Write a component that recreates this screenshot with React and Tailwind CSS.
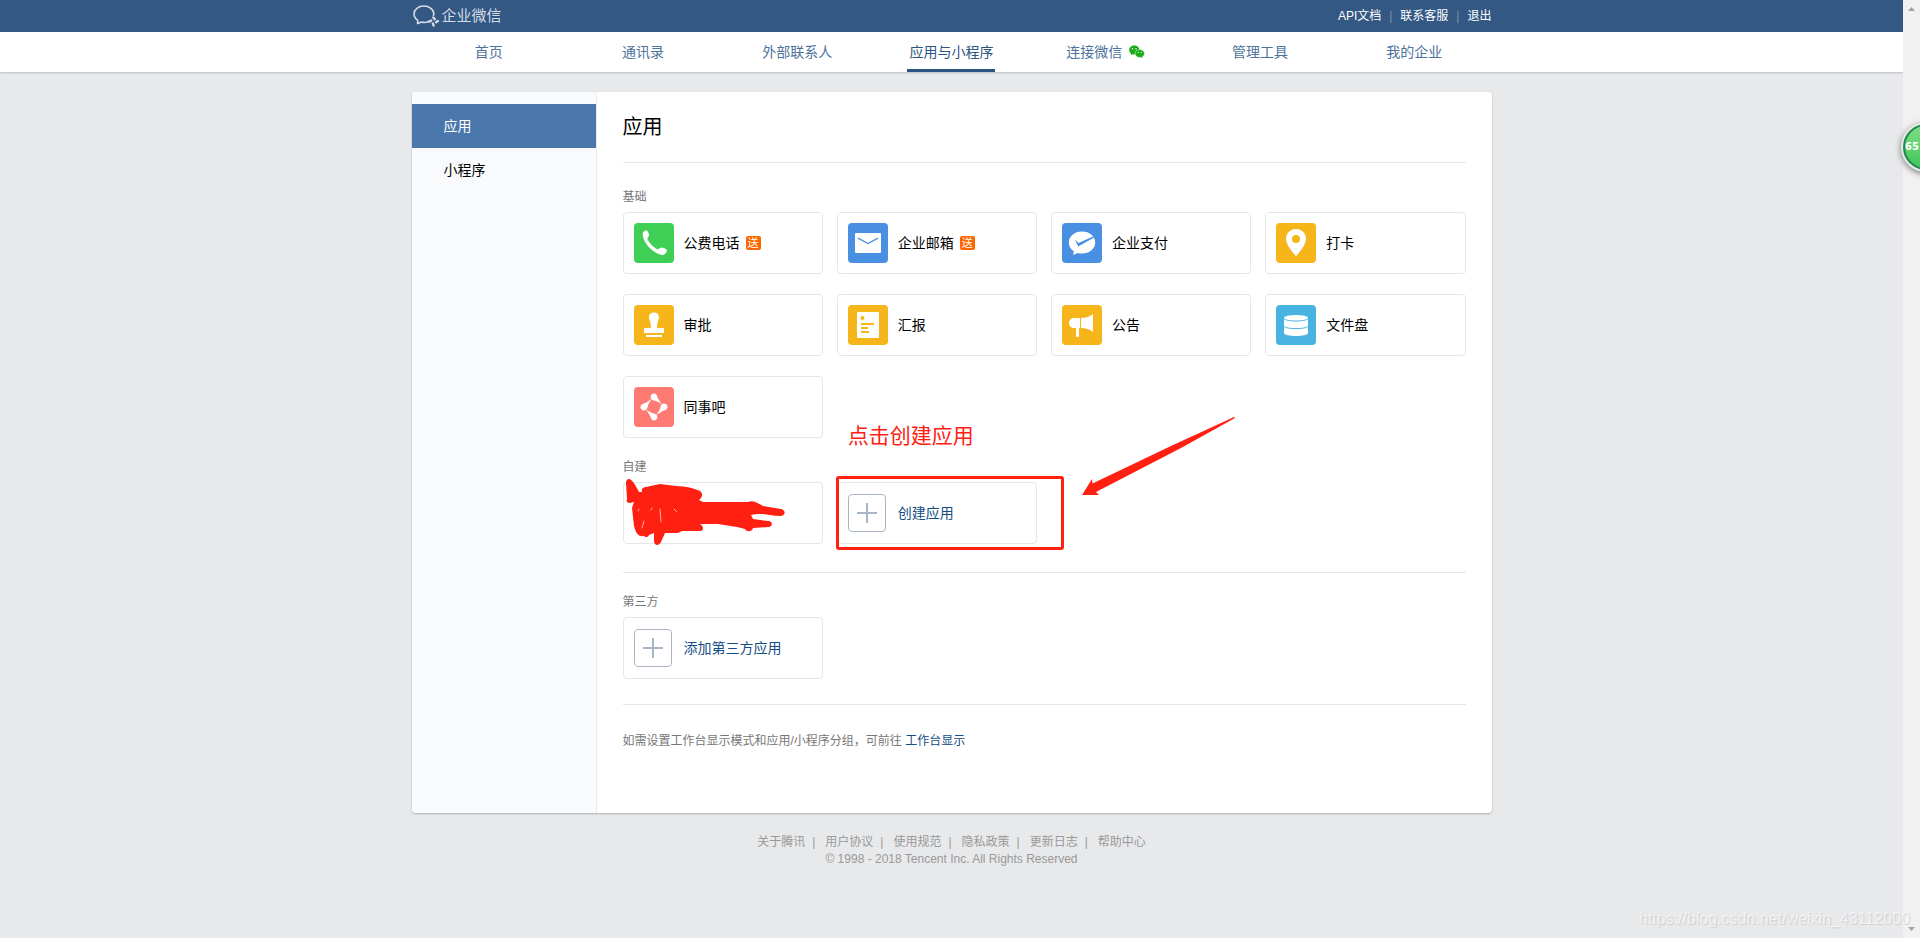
import React from "react";

const navItems = [
  { text: "首页" },
  { text: "通讯录" },
  { text: "外部联系人" },
  { text: "应用与小程序", active: true },
  { text: "连接微信", wechat: true },
  { text: "管理工具" },
  { text: "我的企业" },
];

const footerLinks = ["关于腾讯", "用户协议", "使用规范", "隐私政策", "更新日志", "帮助中心"];

const LogoIcon = () => (
  <svg width="27" height="22" viewBox="0 0 27 22" fill="none" stroke="#d3dce7" strokeWidth="1.6" strokeLinecap="round" strokeLinejoin="round" className="shrink-0">
    <path d="M16.500 16.200C14.500 17.500 12 17.800 8.800 17.100L4.500 18.600L4.800 15.300C2.300 13.500 1 11.200 1 8.900C1 4.500 5.300 1 10.800 1C16.300 1 20.800 4.500 20.800 8.700C20.800 9.300 20.700 9.700 20.500 10.200" />
    <path d="M20.300 12.400L21.800 14.200M25 16L23 17.200M20.600 20.400L19.800 18.600M16.200 16.600L18.200 15.600" strokeWidth="2.400" />
  </svg>
);

const WechatIcon = () => (
  <svg width="16" height="14" viewBox="0 0 16 14" className="shrink-0">
    <path d="M5.300 0.600C2.400 0.600 0.200 2.500 0.200 5C0.200 6.400 0.900 7.600 2 8.400L1.500 10.200L3.500 9.200C4.100 9.300 4.700 9.400 5.300 9.400C8.200 9.400 10.500 7.400 10.500 5C10.500 2.500 8.200 0.600 5.300 0.600Z" fill="#1aad19" />
    <path d="M10.800 4.600C8.100 4.600 6 6.300 6 8.600C6 10.900 8.100 12.600 10.800 12.600C11.300 12.600 11.800 12.500 12.300 12.400L14.100 13.300L13.600 11.700C14.800 10.900 15.500 9.900 15.500 8.600C15.500 6.300 13.400 4.600 10.800 4.600Z" fill="#1aad19" stroke="#fff" strokeWidth="0.500" />
    <g fill="#fff">
      <circle cx="3.600" cy="3.700" r="0.700" />
      <circle cx="7" cy="3.700" r="0.700" />
      <circle cx="9.200" cy="7.500" r="0.600" />
      <circle cx="12.200" cy="7.500" r="0.600" />
    </g>
  </svg>
);

const PhoneIcon = () => (
  <path d="M9 9.500C10.200 8 12 7.200 12.900 7.400C14.200 8.600 15 10.500 15.100 12.500C15 13.800 13.600 14.300 13.400 15.500C14 18.500 19.500 24.600 23.500 26.300C25 26.500 25.500 24.900 27 24.600C29.500 24.700 31.800 25.800 32.900 27.200C32.900 29 31.300 31.300 29.200 32C26.500 32.200 20.500 29.500 15.800 25C11 20.300 7.600 13 9 9.500Z" fill="#fff" />
);

const MailIcon = () => (
  <>
    <rect x="7" y="10" width="26" height="20" rx="1" fill="#fff" />
    <path d="M10 15.200L20 20.500L30 15.200" fill="none" stroke="#4a90e2" strokeWidth="1.400" />
  </>
);

const PayIcon = () => (
  <>
    <path d="M20 8.500C12.600 8.500 6.800 13.300 6.800 19.600C6.800 23.200 8.700 26.300 11.700 28.300L11.300 32L15.600 30C17 30.400 18.500 30.600 20 30.600C27.400 30.600 33.200 25.900 33.200 19.600C33.200 13.300 27.400 8.500 20 8.500Z" fill="#fff" />
    <path d="M13 16.800L16.600 20L31 13.600L31.700 14.800L16.200 23.600Z" fill="#4a90e2" />
  </>
);

const PinIcon = () => (
  <>
    <path d="M20 6C14.500 6 10 10.300 10 15.800C10 21.500 15.500 28 20 33.200C24.500 28 30 21.500 30 15.800C30 10.300 25.500 6 20 6Z" fill="#fff" />
    <circle cx="20" cy="16" r="4" fill="#f7b51c" />
  </>
);

const StampIcon = () => (
  <path d="M20 7.500C16.800 7.500 14.800 9.700 15 12.500C15.300 15.500 17.400 18 16.800 23H11C10.400 23 10 23.400 10 24V28H30V24C30 23.400 29.600 23 29 23H23.200C22.600 18 24.700 15.500 25 12.500C25.200 9.700 23.200 7.500 20 7.500ZM12 30H28V32H12Z" fill="#fff" />
);

const ReportIcon = () => (
  <>
    <rect x="9" y="7" width="22" height="26" rx="1" fill="#fff" />
    <circle cx="14.500" cy="13" r="2" fill="#f7b51c" />
    <path d="M13 18H26V20H13ZM13 22H20V24H13ZM13 26H21V28H13Z" fill="#f7b51c" />
  </>
);

const HornIcon = () => (
  <path d="M18 13H12C9 13 7 15.200 7 18C7 20.800 9 23 12 23H14V31C14 31.600 14.400 32 15 32H16C16.600 32 17 31.600 17 31V23H18ZM19 13C23.500 13 28 11.500 31 9V27C28 24.500 23.500 23 19 23Z" fill="#fff" />
);

const DiskIcon = () => (
  <>
    <path d="M8 13V28C8 29.700 13.400 31 20 31C26.600 31 32 29.700 32 28V13Z" fill="#fff" />
    <ellipse cx="20" cy="12.800" rx="12" ry="2.800" fill="#fff" />
    <path d="M8 13.600C9.500 15.300 14 16 20 16C26 16 30.500 15.300 32 13.600M8 21.200C9.500 22.900 14 23.600 20 23.600C26 23.600 30.500 22.900 32 21.200" fill="none" stroke="#48b3e0" strokeWidth="1" />
  </>
);

const CircleIcon = () => (
  <g fill="#fff">
    {[0, 90, 180, 270].map((deg) => (
      <path key={deg} transform={`rotate(${deg} 20 20)`} d="M20 6.500C18.100 6.500 16.600 8 16.600 9.900C16.600 11.900 18 13.200 20 13.600C22.500 14.100 25 15.300 28 17.800C26.500 14.500 24 12.500 23.400 9.900C23 8 21.900 6.500 20 6.500Z" />
    ))}
  </g>
);

const apps = [
  { name: "公费电话", icon: PhoneIcon, bg: "bg-[#3fcf55]", gift: true },
  { name: "企业邮箱", icon: MailIcon, bg: "bg-[#4a90e2]", gift: true },
  { name: "企业支付", icon: PayIcon, bg: "bg-[#4a90e2]" },
  { name: "打卡", icon: PinIcon, bg: "bg-[#f7b51c]" },
  { name: "审批", icon: StampIcon, bg: "bg-[#f7b51c]" },
  { name: "汇报", icon: ReportIcon, bg: "bg-[#f7b51c]" },
  { name: "公告", icon: HornIcon, bg: "bg-[#f7b51c]" },
  { name: "文件盘", icon: DiskIcon, bg: "bg-[#48b3e0]" },
  { name: "同事吧", icon: CircleIcon, bg: "bg-[#ff7a73]" },
];

const AppCard = ({ app }) => (
  <a href="#" className="flex h-[62px] items-center rounded border border-[#e4e6e9] px-2.5 text-sm text-black">
    <svg width="40" height="40" viewBox="0 0 40 40" className={`shrink-0 rounded ${app.bg}`}>
      <app.icon />
    </svg>
    <span className="ml-2.5">{app.name}</span>
    {app.gift && <span className="ml-1.5 h-3.5 w-[15px] rounded-xs bg-[#ff6600] text-center text-[11px] leading-[14px] text-white">送</span>}
  </a>
);

const AddCard = ({ text }) => (
  <a href="#" className="flex h-[62px] items-center rounded border border-[#e4e6e9] px-2.5 text-sm text-[#144d84]">
    <svg width="38" height="38" viewBox="0 0 38 38" fill="none" stroke="#a9b5c4" className="shrink-0">
      <rect x="0.500" y="0.500" width="37" height="37" rx="3.500" />
      <path d="M9 19H29M19 9V29" strokeWidth="2" />
    </svg>
    <span className="ml-3">{text}</span>
  </a>
);

const Scribble = () => (
  <svg width="166" height="70" viewBox="0 0 166 70" className="absolute -top-1 left-0">
    <path
      d="M5 0C8 0 12 7 15 13L18 13C17 10 19 8 22 8L36 5L52 7C62 7 72 10 76 12C79 14 79 18 75 21L79 23H124C128 21 132 23 139 27L157 30C162 31 162 37 156 37C147 37 138 33 127 36L129 40L144 42C149 42 149 47 145 48L129 49C129 52 123 54 121 50L113 48L94 45H76C80 47 80 52 76 52L58 52L54 54H41L37 63C35 67 31 67 30 63V54L25 56C24 59 21 58 20 57C14 58 12 54 10 47L8 29L10 23L6 24C3 24 2 22 3 20L2 4C2 2 3 0 5 0Z"
      fill="#ff2012"
    />
    <path d="M14 32L15 30M18 49L20 42M36 30L37 43M50 30L53 33M27 31L28 29" stroke="#ffb0aa" strokeWidth="1" strokeLinecap="round" />
  </svg>
);

const Header = () => (
  <header className="h-8 bg-[#335883]">
    <div className="mx-auto flex h-full w-full max-w-[1080px] items-center justify-between">
      <a href="#" className="flex items-center gap-0.5 pl-px text-[15px] text-[#d3dce7]">
        <LogoIcon />
        企业微信
      </a>
      <div className="flex items-center text-xs text-white">
        <a href="#">API文档</a>
        <span className="mx-2 text-[#7c95b0]">|</span>
        <a href="#">联系客服</a>
        <span className="mx-2 text-[#7c95b0]">|</span>
        <a href="#">退出</a>
      </div>
    </div>
  </header>
);

const Nav = () => (
  <nav className="h-10 bg-white shadow-[0_1px_2px_rgba(0,0,0,0.2)]">
    <div className="mx-auto grid h-full w-full max-w-[1080px] grid-cols-7 text-sm">
      {navItems.map((item) => (
        <a
          key={item.text}
          href="#"
          className={`flex items-center justify-self-center border-y-3 border-t-transparent px-0.5 ${item.active ? "border-b-[#2e5481] text-[#2e5481]" : "border-b-transparent text-[#4d729b]"}`}
        >
          {item.text}
          {item.wechat && <span className="ml-[7px]"><WechatIcon /></span>}
        </a>
      ))}
    </div>
  </nav>
);

const Footer = () => (
  <footer className="pt-[21px] text-center text-xs leading-[17px] text-[#999]">
    <div className="flex justify-center">
      {footerLinks.map((text, i) => (
        <span key={text} className="flex">
          <a href="#">{text}</a>
          {i < footerLinks.length - 1 && <span className="ml-[7px] mr-2.5">|</span>}
        </span>
      ))}
    </div>
    <p>© 1998 - 2018 Tencent Inc. All Rights Reserved</p>
  </footer>
);

const cardGrid = "grid grid-cols-4 gap-x-3.5 gap-y-5";

const App = () => {
  return (
    <div className="relative flex min-h-screen overflow-hidden bg-[#e8e9eb] font-['Liberation_Sans','Noto_Sans_CJK_SC',sans-serif]">
      <div className="min-w-0 flex-1">
        <Header />
        <Nav />

        <div className="mx-auto mt-5 flex w-full max-w-[1080px] overflow-hidden rounded bg-white shadow-[0_1px_2px_rgba(0,0,0,0.25)]">
          <aside className="w-[185px] shrink-0 border-r border-dotted border-[#d9dce0] bg-[#f9fafc] pt-3 text-sm leading-[44px]">
            <a href="#" className="block bg-[#4a77ac] pl-8 text-white">应用</a>
            <a href="#" className="block pl-8 text-black">小程序</a>
          </aside>

          <main className="min-w-0 flex-1 px-[26px] pb-16 text-xs leading-4 text-[#777]">
            <h1 className="h-[71px] border-b border-[#e4e6e9] text-xl leading-[70px] text-black">应用</h1>

            <h2 className="mt-[26px] mb-[7px]">基础</h2>
            <div className={cardGrid}>
              {apps.map((app) => <AppCard key={app.name} app={app} />)}
            </div>

            <h2 className="mt-[21px] mb-[7px]">自建</h2>
            <div className={cardGrid}>
              <div className="relative rounded border border-[#e4e6e9]">
                <Scribble />
              </div>
              <div className="relative">
                <AddCard text="创建应用" />
                {/* highlight, caption and arrow */}
                <div className="absolute -top-1.5 -left-px h-[74px] w-[228px] rounded-[3px] border-3 border-[#ff2012]" />
                <p className="absolute -top-[60px] left-[11px] text-[21px] leading-7 whitespace-nowrap text-[#ff2012]">点击创建应用</p>
                <svg width="156" height="80" viewBox="0 0 156 80" className="absolute -top-[66px] left-[244px]">
                  <path d="M1 79L11 63L11.500 67.500L90 30L153 1L154 2L100 32L15 76L18 79Z" fill="#ff2012" />
                </svg>
              </div>
            </div>

            <h2 className="mt-7 mb-[7px] border-t border-[#e4e6e9] pt-[21px]">第三方</h2>
            <div className={cardGrid}>
              <AddCard text="添加第三方应用" />
            </div>

            <p className="mt-[25px] border-t border-[#e4e6e9] pt-7">
              如需设置工作台显示模式和应用/小程序分组，可前往 <a href="#" className="text-[#144d84]">工作台显示</a>
            </p>
          </main>
        </div>

        <Footer />
      </div>

      {/* scrollbar track */}
      <div className="flex w-[17px] shrink-0 flex-col items-center justify-between bg-[#f1f1f1] pt-[7px] pb-[7px]">
        <svg width="7" height="4"><path d="M0 4L3.500 0L7 4Z" fill="#a3a3a3" /></svg>
        <svg width="7" height="4"><path d="M0 0L3.500 4L7 0Z" fill="#a3a3a3" /></svg>
      </div>

      {/* floating speed ball */}
      <div className="absolute top-[122px] -right-[31px] h-[50px] w-[50px] rounded-full border-2 border-[#e8e8e8] bg-[#1f8a50] p-0.5 shadow-[0_2px_6px_rgba(0,0,0,0.5)]">
        <div className="h-full w-full rounded-full bg-linear-to-b from-[#7ddc86] to-[#3ec558] font-['DejaVu_Sans'] text-[10px] leading-[42px] font-bold text-white">65</div>
      </div>

      <p className="absolute right-2.5 bottom-[7px] text-base leading-6 text-white/60 [text-shadow:1px_1px_1px_rgba(0,0,0,0.12)]">https://blog.csdn.net/weixin_43112000</p>
    </div>
  );
};

export default App;
